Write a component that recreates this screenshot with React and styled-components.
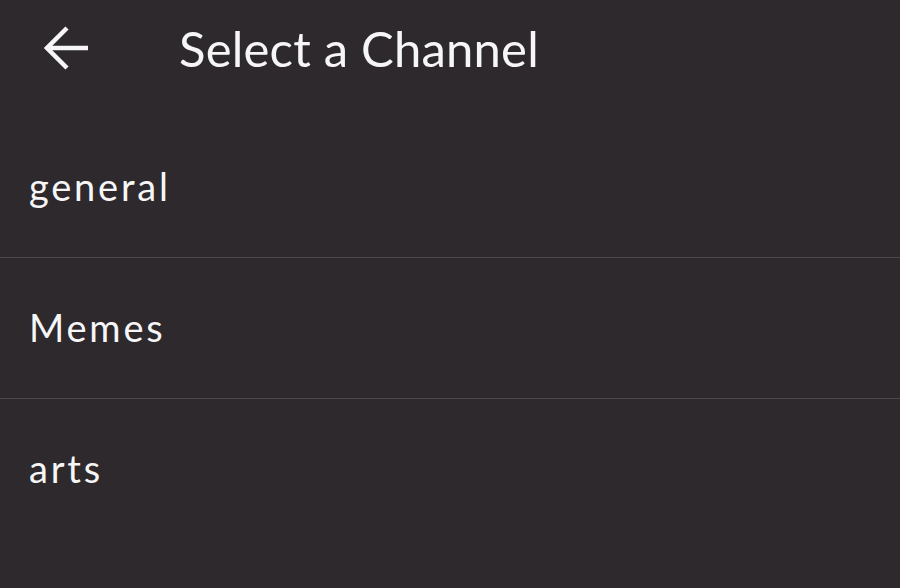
import { createGlobalStyle, styled } from "styled-components";

const GlobalStyle = createGlobalStyle`
  html, body {
    margin: 0;
    padding: 0;
    background: #2d292d;
  }
  body {
    font-family: Lato, "Open Sans", sans-serif;
    color: #f7f6f7;
  }
`;

const channels = ["general", "Memes", "arts"];

const BackArrow = () => (
  <svg width="46" height="44" viewBox="0 0 46 44" fill="none">
    <path
      d="M44 22H3M23 2L3 22l20 20"
      stroke="#f7f6f7"
      strokeWidth="4.5"
      strokeLinecap="butt"
      strokeLinejoin="miter"
    />
  </svg>
);

const App = () => {
  return (
    <Page>
      <GlobalStyle />
      <Header>
        <BackButton aria-label="Back">
          <BackArrow />
        </BackButton>
        <Title>Select a Channel</Title>
      </Header>
      <List>
        {channels.map((name, i) => (
          <Row key={name} last={i === channels.length - 1}>
            {name}
          </Row>
        ))}
      </List>
    </Page>
  );
};

const Page = styled.div`
  width: 900px;
  height: 588px;
  background: #2d292d;
  overflow: hidden;
`;

const Header = styled.div`
  display: flex;
  align-items: center;
  height: 96px;
  padding-left: 44px;
`;

const BackButton = styled.button`
  display: flex;
  align-items: center;
  justify-content: center;
  padding: 0;
  margin: 0;
  border: none;
  background: none;
  width: 46px;
  height: 46px;
`;

const Title = styled.h1`
  margin: 0 0 0 89px;
  font-size: 49px;
  font-weight: 400;
  letter-spacing: 0.2px;
`;

const List = styled.div`
  margin-top: 21px;
  display: flex;
  flex-direction: column;
`;

const Row = styled.div`
  display: flex;
  align-items: center;
  height: 141px;
  padding: 0 0 3px 29px;
  box-sizing: border-box;
  font-size: 38px;
  letter-spacing: 2.8px;
  border-bottom: ${(p) => (p.last ? "none" : "1.5px solid #4b474b")};
`;

export default App;
